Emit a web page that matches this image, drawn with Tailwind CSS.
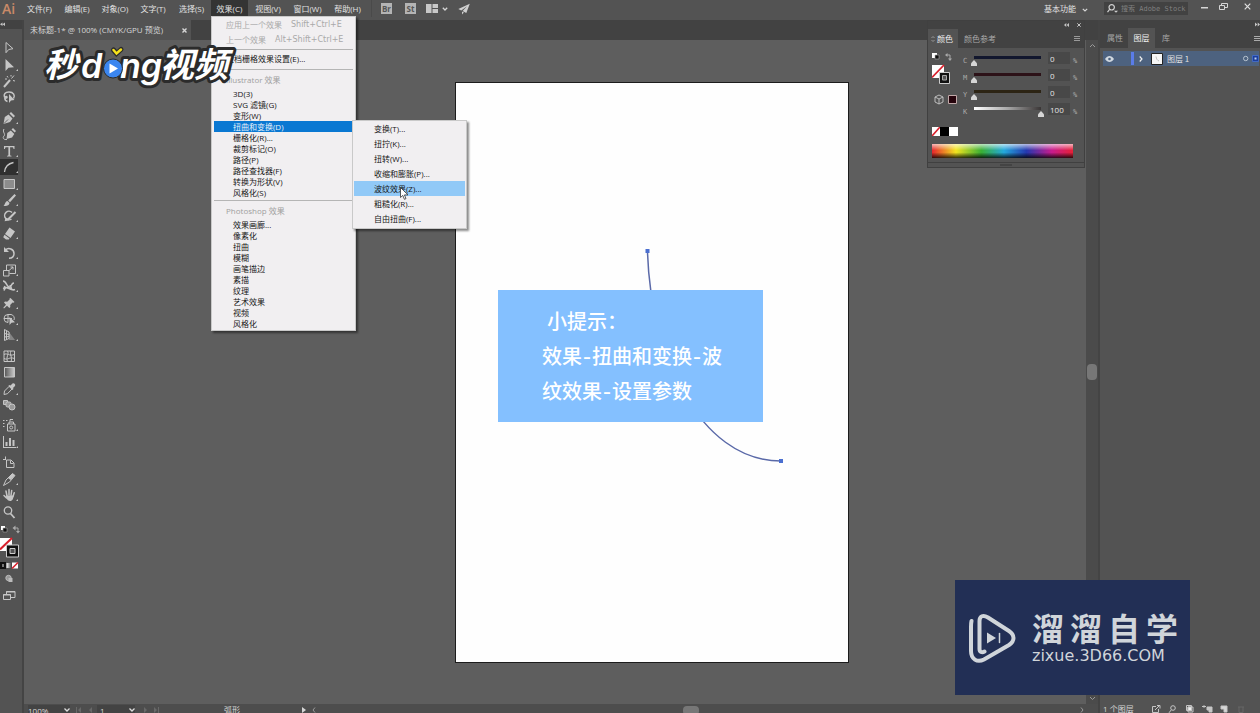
<!DOCTYPE html>
<html lang="zh-CN">
<head>
<meta charset="utf-8">
<title>未标题-1 - Illustrator</title>
<script src="https://cdn.jsdelivr.net/npm/@tailwindcss/browser@4"></script>
</head>
<body class="h-screen overflow-hidden bg-[#535353] font-['Open_Sans','Noto_Sans_CJK_SC',sans-serif] text-[8px] leading-none text-[#d6d6d6]">
<div class="relative flex h-[calc(100vh+4px)] flex-col">

  <!-- Menu bar -->
  <header class="relative z-30 flex h-5 shrink-0 items-start bg-[#535353]">
    <div class="flex h-[17px] w-[21px] items-center pl-[2px] font-['Open_Sans',sans-serif] text-[14px] font-semibold text-[#c98a68]">Ai</div>
    <nav class="flex h-[17px] text-[#e2e2e2]">
      <button class="w-[37px] whitespace-nowrap">文件(F)</button>
      <button class="w-[38px] whitespace-nowrap">编辑(E)</button>
      <button class="w-[38px] whitespace-nowrap">对象(O)</button>
      <button class="w-[38px] whitespace-nowrap">文字(T)</button>
      <button class="w-[39px] whitespace-nowrap">选择(S)</button>
      <div class="relative">
        <button class="h-[17px] w-[37px] whitespace-nowrap bg-[#343434]">效果(C)</button>
        <!-- Effect menu -->
        <div class="absolute top-4 left-0 w-[145px] border border-[#c9c9c9] bg-[#f1eff1] pb-px text-[#161616] shadow-[2px_2px_2px_rgba(0,0,0,0.45)]">
          <button class="flex h-[15px] w-full items-center gap-[9px] pl-[14px] whitespace-nowrap text-[#a9a9a9]"><span>应用上一个效果</span><span class="font-['DejaVu_Sans',sans-serif]">Shift+Ctrl+E</span></button>
          <button class="flex h-[15px] w-full items-center gap-[9px] pl-[14px] whitespace-nowrap text-[#a9a9a9]"><span>上一个效果</span><span class="font-['DejaVu_Sans',sans-serif]">Alt+Shift+Ctrl+E</span></button>
          <div class="flex h-[5px] items-center"><hr class="mx-[2px] w-full border-[#b5b5b5]"></div>
          <button class="flex h-[14px] w-full items-center pl-[14px]">文档栅格效果设置(E)...</button>
          <div class="flex h-[6px] items-center"><hr class="mx-[2px] w-full border-[#b5b5b5]"></div>
          <div class="flex h-4 items-center pl-[14px] text-[#a0a0a0]">Illustrator 效果</div>
          <button class="flex h-[11px] w-full items-center pl-[21px]">3D(3)</button>
          <button class="flex h-[11px] w-full items-center pl-[21px]">SVG 滤镜(G)</button>
          <button class="flex h-[11px] w-full items-center pl-[21px]">变形(W)</button>
          <button class="flex h-[11px] w-full items-center border-x-2 border-r-[3px] border-[#f1eff1] bg-[#0a78d2] pl-[19px] text-[#e8f2fb]">扭曲和变换(D)</button>
          <button class="flex h-[11px] w-full items-center pl-[21px]">栅格化(R)...</button>
          <button class="flex h-[11px] w-full items-center pl-[21px]">裁剪标记(O)</button>
          <button class="flex h-[11px] w-full items-center pl-[21px]">路径(P)</button>
          <button class="flex h-[11px] w-full items-center pl-[21px]">路径查找器(F)</button>
          <button class="flex h-[11px] w-full items-center pl-[21px]">转换为形状(V)</button>
          <button class="flex h-[11px] w-full items-center pl-[21px]">风格化(S)</button>
          <div class="flex h-[5px] items-center"><hr class="mx-[2px] w-full border-[#b5b5b5]"></div>
          <div class="flex h-4 items-center pl-[14px] text-[#a0a0a0]">Photoshop 效果</div>
          <button class="flex h-[11px] w-full items-center pl-[21px]">效果画廊...</button>
          <button class="flex h-[11px] w-full items-center pl-[21px]">像素化</button>
          <button class="flex h-[11px] w-full items-center pl-[21px]">扭曲</button>
          <button class="flex h-[11px] w-full items-center pl-[21px]">模糊</button>
          <button class="flex h-[11px] w-full items-center pl-[21px]">画笔描边</button>
          <button class="flex h-[11px] w-full items-center pl-[21px]">素描</button>
          <button class="flex h-[11px] w-full items-center pl-[21px]">纹理</button>
          <button class="flex h-[11px] w-full items-center pl-[21px]">艺术效果</button>
          <button class="flex h-[11px] w-full items-center pl-[21px]">视频</button>
          <button class="flex h-[11px] w-full items-center pl-[21px]">风格化</button>
          <!-- Distort & transform submenu -->
          <div class="absolute top-[103px] left-[140px] w-[115px] border border-[#c9c9c9] bg-[#f1eff1] pb-[2px] shadow-[2px_2px_2px_rgba(0,0,0,0.45)]">
            <button class="flex h-[15px] w-full items-center pl-[21px]">变换(T)...</button>
            <button class="flex h-[15px] w-full items-center pl-[21px]">扭拧(K)...</button>
            <button class="flex h-[15px] w-full items-center pl-[21px]">扭转(W)...</button>
            <button class="flex h-[15px] w-full items-center pl-[21px]">收缩和膨胀(P)...</button>
            <button class="flex h-[15px] w-full items-center border-x border-[#f1eff1] bg-[#91c9f7] pl-5">波纹效果(Z)...</button>
            <button class="flex h-[15px] w-full items-center pl-[21px]">粗糙化(R)...</button>
            <button class="flex h-[15px] w-full items-center pl-[21px]">自由扭曲(F)...</button>
            <svg class="absolute top-[66px] left-[47px] h-[13px] w-[9px]" viewBox="0 0 9 13"><path d="M.5.5v10l2.3-2.1 1.6 3.9 1.6-.7-1.6-3.7H8z" fill="#fff" stroke="#333" stroke-width=".8"/></svg>
          </div>
        </div>
      </div>
      <button class="w-[40px] whitespace-nowrap">视图(V)</button>
      <button class="w-[39px] whitespace-nowrap">窗口(W)</button>
      <button class="w-[41px] whitespace-nowrap">帮助(H)</button>
    </nav>
    <div class="ml-[3px] flex h-[17px] items-center border-l border-[#4a4a4a] pl-[9px]">
      <button class="h-[11px] w-[11px] bg-[#b4b4b4] text-[8px] leading-[11px] font-bold text-[#555]">Br</button>
      <button class="ml-[13px] h-[11px] w-[11px] bg-[#b4b4b4] text-[8px] leading-[11px] font-bold text-[#555]">St</button>
      <button class="ml-[10px] flex items-center gap-1" aria-label="排列文档">
        <svg class="h-[9px] w-3" viewBox="0 0 12 9" fill="#c8c8c8"><path d="M0 0h5.5v9H0zM6.5 0H12v4H6.5zM6.5 5H12v4H6.5z"/></svg>
        <svg class="h-2 w-[6px]" viewBox="0 0 6 8" fill="none" stroke="#d6d6d6" stroke-width="1.3"><path d="M.8 2.8L3 5l2.2-2.2"/></svg>
      </button>
      <button class="ml-[10px]" aria-label="启动"><svg class="h-3 w-3" viewBox="0 0 12 12" fill="#d0d0d0"><path d="M11.8.8L.3 6l3 1.500L9 3.200 4.600 8.100 8.300 10zM4 8.600v3l1.900-2z"/></svg></button>
    </div>
    <div class="ml-auto flex h-[17px] items-center">
      <button class="flex items-center gap-[6px] text-[#e2e2e2]">基本功能
        <svg class="h-2 w-[6px]" viewBox="0 0 6 8" fill="none" stroke="#d6d6d6" stroke-width="1.2"><path d="M.8 3.800L3 6l2.200-2.200"/></svg>
      </button>
      <label class="ml-[16px] flex h-[13px] w-[84px] items-center bg-[#424242] pl-[3px]">
        <svg class="mr-[3px] h-[9px] w-[11px] shrink-0" viewBox="0 0 11 9" fill="none" stroke="#cfcfcf" stroke-width="1.2"><circle cx="4.700" cy="3.300" r="2.700"/><path d="M2.800 5.200L.5 8.200"/><path d="M7 6.800h4L9 8.800z" fill="#cfcfcf" stroke="none"/></svg>
        <input aria-label="搜索" class="w-full min-w-0 bg-transparent font-['DejaVu_Sans_Mono','Noto_Sans_CJK_SC',monospace] text-[7px] outline-none placeholder:text-[#808080]" placeholder="搜索 Adobe Stock">
      </label>
      <button class="ml-[13px]" aria-label="最小化"><svg class="h-[9px] w-[7px]" viewBox="0 0 7 9"><path d="M0 3h7v1.500H0z" fill="#d6d6d6"/></svg></button>
      <button class="ml-[11px] pb-[5px]" aria-label="还原"><svg class="h-[7px] w-[9px]" viewBox="0 0 9 7" fill="none" stroke="#d6d6d6"><path d="M.5 2.500h5v4h-5zM2.500 2.500v-2h6v4h-3"/></svg></button>
      <button class="mr-[9px] ml-[16px] pb-[5px]" aria-label="关闭"><svg class="h-[7px] w-[7px]" viewBox="0 0 7 7" stroke="#e0e0e0" stroke-width="1.200"><path d="M.7.7l5.600 5.600M6.300.7L.7 6.300"/></svg></button>
    </div>
  </header>

  <div class="flex min-h-0 flex-1">
    <!-- Tool bar -->
    <aside class="flex w-6 shrink-0 flex-col border-r-2 border-[#444] text-[#c6c6c6]">
      <div class="h-[9px] shrink-0 bg-[#424242]"><svg class="h-[9px] w-[6px]" viewBox="0 0 6 9" fill="#c6c6c6"><path d="M2.500 2.500v3.600L0 4.300zM5 2.500v3.600L2.500 4.300z"/></svg></div>
      <div class="flex h-[491px] w-5 shrink-0 flex-col pt-[11px] [&>button]:min-h-0 [&>button]:flex-1 [&_svg]:h-4 [&_svg]:w-5">
        <button aria-label="选择"><svg viewBox="0 0 20 16" fill="none" stroke="currentColor"><path d="M6 2.500v10.200l2.700-3.200 4.300-.8z"/></svg></button>
        <button aria-label="直接选择"><svg viewBox="0 0 20 16" fill="currentColor"><path d="M5.500 2v12l3-3.200 5.500-.6zM18 12v2h-2z"/></svg></button>
        <button aria-label="魔棒"><svg viewBox="0 0 20 16" fill="none" stroke="currentColor"><path d="M4 14l6-7" stroke-width="2"/><path d="M11.500 5.500l2.500-3M7 3l1 1.500M13 7.500l2 .5M11 2v1.500M5 6h2"/></svg></button>
        <button aria-label="套索"><svg viewBox="0 0 20 16" fill="none" stroke="currentColor" stroke-width="1.500"><path d="M13.500 9.500C15.500 6.500 13.500 3 9 3 5 3 3.500 5.500 4.500 8c.5 1.200 2.500 1.500 2.500.2S5 7.300 4.800 9c0 1.500 1 3 2.700 3.500"/><path d="M9 5v9l2-2.500 3.500-.5z" fill="currentColor" stroke="none"/></svg></button>
        <span class="h-1 shrink-0"></span>
        <button aria-label="钢笔"><svg viewBox="0 0 20 16" fill="currentColor"><path d="M3.500 14l1.300-7 3.700-2.500 4 4L10 12zM9.500 3.500L11 2l4 4-1.500 1.500zM18 12v2h-2z"/><path d="M4 13.500l4-4" stroke="#535353" stroke-width=".8"/></svg></button>
        <button aria-label="曲率"><svg viewBox="0 0 20 16" fill="currentColor"><path d="M6.500 13l.8-6 3.500-2.500 3.500 3.500-2.300 3.500zM11.500 3.500L13 2l3 3-1.300 1.500z"/><path d="M4 3C2 6 6 8 4 10s0 4 3 3.500" fill="none" stroke="currentColor"/></svg></button>
        <button aria-label="文字"><svg viewBox="0 0 20 16" fill="currentColor"><path d="M4 3h10.500v3h-1c0-1.300-.5-1.700-1.700-1.700h-1.700v7.400c0 .7.400 1 1.400 1v.8H7v-.8c1 0 1.400-.3 1.400-1V4.300H6.700C5.500 4.300 5 4.700 5 6H4zM18 12v2h-2z"/></svg></button>
        <button aria-label="弧形" class="w-[18px] bg-[#303030]"><svg viewBox="0 0 20 16" fill="none" stroke="currentColor"><path d="M4.500 13C5 8 8.500 4.500 13.500 3.500" stroke-width="1.300"/><path d="M18 12v2h-2z" fill="currentColor" stroke="none"/></svg></button>
        <button aria-label="矩形"><svg viewBox="0 0 20 16"><path d="M4 3.500h10.500v9H4z" fill="#8c8c8c" stroke="currentColor"/><path d="M18 12v2h-2z" fill="currentColor"/></svg></button>
        <button aria-label="画笔"><svg viewBox="0 0 20 16" fill="currentColor"><path d="M14.500 2L16 3.500l-6 6.700L8.200 8.500zM7.500 9l2 2c-.5 3-3.500 3.200-6 2.700C5.500 12.500 4.800 9.500 7.500 9zM18 12v2h-2z"/></svg></button>
        <button aria-label="Shaper"><svg viewBox="0 0 20 16" fill="none" stroke="currentColor" stroke-width="1.500"><path d="M12 4.500A4.300 4.300 0 1 0 11.500 11"/><path d="M15.500 4L8 11.500l-2 .5.500-2" stroke-width="2"/><path d="M18 12v2h-2z" fill="currentColor" stroke="none"/></svg></button>
        <button aria-label="橡皮擦"><svg viewBox="0 0 20 16" fill="currentColor"><path d="M9.500 2.500l5.500 4-4.500 6.500-5.500-4zM4.500 9.800l5 3.700-.7 1H6l-2.800-2.200zM18 12v2h-2z"/></svg></button>
        <span class="h-1 shrink-0"></span>
        <button aria-label="旋转"><svg viewBox="0 0 20 16" fill="none" stroke="currentColor" stroke-width="1.500"><path d="M5.500 5c3-3 8.500-1 8.500 3.500 0 3-2 4.700-5 4.700"/><path d="M4 2v5h5z" fill="currentColor" stroke="none"/><path d="M18 12v2h-2z" fill="currentColor" stroke="none"/></svg></button>
        <button aria-label="比例缩放"><svg viewBox="0 0 20 16" fill="none" stroke="currentColor"><path d="M3.500 8.500h5.500V14H3.500zM6.500 8V3h9v8.500H9.500M9 8.500l4-3.500M10.500 5H13v2.500"/><path d="M18 12v2h-2z" fill="currentColor" stroke="none"/></svg></button>
        <button aria-label="宽度"><svg viewBox="0 0 20 16" fill="none" stroke="currentColor" stroke-width="1.600"><path d="M3 3c2 0 3 2 4 4s3 3 4 1 1-3 3-3M4 12.500c1-4 3-3 5-2s4 2 6 1M5 8l-1.500 3M10 7l2 5"/><path d="M18 12v2h-2z" fill="currentColor" stroke="none"/></svg></button>
        <button aria-label="操控变形"><svg viewBox="0 0 20 16" fill="currentColor"><path d="M10.500 3l4 4-1 .8-1-.3-2.300 2.400.1 2.200-1 .9L7 10.700 4 13.500l-.7-.7L6 9.700 4 7.500l1-.9 2.200.1L9.600 4.500 9.500 3.600zM18 12v2h-2z"/></svg></button>
        <button aria-label="形状生成器"><svg viewBox="0 0 20 16" fill="none" stroke="currentColor"><path d="M8 11.500a4 4 0 1 1 0-8h3a4 4 0 0 1 3 5.500M8 3.500v8M4 7.500h8"/><path d="M9.500 6v8l2-2.300 3.500-.5zM18 12v2h-2z" fill="currentColor" stroke="none"/></svg></button>
        <button aria-label="透视网格"><svg viewBox="0 0 20 16" fill="none" stroke="currentColor"><path d="M9 5l6 8H9z" fill="#858585" stroke="none"/><path d="M4.500 2.500v11M4.500 2.500l4.500 2.500v6.500l-4.500 2M6.500 4v8.500M4.500 6.500L9 7.500M4.500 10L9 9.500"/><path d="M18 12v2h-2z" fill="currentColor" stroke="none"/></svg></button>
        <span class="h-1 shrink-0"></span>
        <button aria-label="网格"><svg viewBox="0 0 20 16" fill="none" stroke="currentColor"><path d="M4 3h10.500v10.500H4zM4 6.500c3-2 5 2 10.500 0M4 10.500c4 2 5-2 10.500 0M7.500 3c2 3-2 6 0 10.500M11 3c-2 4 2 6 0 10.500"/></svg></button>
        <button aria-label="渐变"><svg viewBox="0 0 20 16"><defs><linearGradient id="tool-gradient"><stop stop-color="#555"/><stop offset="1" stop-color="#ccc"/></linearGradient></defs><path d="M4.500 3.500h10v9.500h-10z" fill="url(#tool-gradient)" stroke="currentColor"/></svg></button>
        <button aria-label="吸管"><svg viewBox="0 0 20 16" fill="none" stroke="currentColor"><path d="M9 5.500L4.500 10 4 13.500l3.500-.8L12 8"/><path d="M9.500 4l1 .5 2-2c1.500-1 3.500 1 2.500 2.500l-2 2 .5 1-1.200 1L8.200 5zM18 12v2h-2z" fill="currentColor" stroke="none"/></svg></button>
        <button aria-label="混合"><svg viewBox="0 0 20 16" fill="#999" stroke="currentColor"><path d="M3.500 3.500h4v4h-4z"/><rect x="6" y="5" width="5" height="5" rx="1.500"/><circle cx="12" cy="10" r="3"/></svg></button>
        <span class="h-1 shrink-0"></span>
        <button aria-label="符号喷枪"><svg viewBox="0 0 20 16" fill="none" stroke="currentColor"><path d="M7.500 7h7.500v7H7.500zM9 7V5h4.500v2M10 4.500v-2h3"/><circle cx="11.200" cy="10.500" r="1.500"/><path d="M3 3.500h1.500M6 3.500h1.500M3 6.500h1.500M3 9.500h1.500"/><path d="M18 12v2h-2z" fill="currentColor" stroke="none"/></svg></button>
        <button aria-label="柱形图"><svg viewBox="0 0 20 16" fill="currentColor"><path d="M3 2h1v11h12v1H3zM5.500 8h2v4h-2zM9 4h2v8H9zM12.500 6h2v6h-2zM18 12v2h-2z"/></svg></button>
        <span class="h-1 shrink-0"></span>
        <button aria-label="画板"><svg viewBox="0 0 20 16" fill="none" stroke="currentColor"><path d="M3 5.500h3M5.500 2.500v3M6.500 6h4.500l3 3v4.500H6.500zM10.500 6.500V9.500h3"/></svg></button>
        <button aria-label="切片"><svg viewBox="0 0 20 16" fill="none" stroke="currentColor"><path d="M3.500 14.500L6 9l6.500-6.500 2.500 2L9.500 11z"/><path d="M8 7l2.500 2 4.500-4.500-2.500-2zM18 12v2h-2z" fill="currentColor" stroke="none"/></svg></button>
        <button aria-label="抓手"><svg viewBox="0 0 20 16" fill="none" stroke="currentColor" stroke-width="1.500" stroke-linecap="round"><path d="M7 9L6 4M9 8V2.500M11 8.500l.7-5M13 9.500l1.200-3.700M6.500 11L4 8.500"/><path d="M6 8.500h7.500c0 3-1 5.500-3.500 5.500s-4-3-4-5.500z" fill="currentColor" stroke="none"/><path d="M18 12v2h-2z" fill="currentColor" stroke="none"/></svg></button>
        <button aria-label="缩放"><svg viewBox="0 0 20 16" fill="none" stroke="currentColor" stroke-width="1.300"><circle cx="8" cy="6.500" r="3.700"/><path d="M10.500 9.500l4 4.500" stroke-width="1.800"/></svg></button>
      </div>
      <!-- Fill, stroke and screen modes -->
      <svg class="mt-[4px] h-[78px] w-[22px] shrink-0" viewBox="0 0 22 78" role="img" aria-label="填色和描边">
        <path d="M1 2h4v4H1z" fill="#fff"/><path d="M3 4h4v4H3z" fill="#111" stroke="#aaa" stroke-width=".6"/>
        <path d="M14 4h4v4" fill="none" stroke="#aaa"/><path d="M12.500 4l3-2.500v5zM18 9.500l-2-2.500h4z" fill="#aaa"/>
        <path d="M0 14h12v13H0z" fill="#fff"/><path d="M0 25.500L12 14" stroke="#d8202c" stroke-width="2"/>
        <path d="M6.500 21h12v12h-12z" fill="#111" stroke="#ccc"/><path d="M10 24.500h5v5h-5z" fill="#535353" stroke="#ccc"/>
        <path d="M0 38h6v7H0z" fill="#111"/><path d="M2 40h2v3H2z" fill="#777"/>
        <defs><linearGradient id="mode-gradient"><stop stop-color="#fff"/><stop offset="1" stop-color="#444"/></linearGradient></defs>
        <path d="M6.500 39h5v5h-5z" fill="url(#mode-gradient)"/>
        <path d="M12 38.500h6v6h-6z" fill="#fff"/><path d="M12 44.500l6-6" stroke="#d8202c" stroke-width="1.600"/>
        <circle cx="8.500" cy="54" r="2.700" fill="#999" stroke="#bbb"/><path d="M8.500 54h4v4h-4z" fill="#bbb"/>
        <path d="M3.500 70.500h7v5h-7zM6.500 70v-2.500H15v6h-4" fill="none" stroke="#c6c6c6"/><path d="M3.500 70h7v1.500h-7zM6.500 67H15v1.500H6.500z" fill="#c6c6c6"/>
      </svg>
    </aside>

    <!-- Document window -->
    <main class="relative flex min-w-0 flex-1 flex-col">
      <div class="flex h-5 shrink-0 bg-[#424242]">
        <div class="flex w-[167px] items-center justify-between bg-[#535353] pr-[4px] pl-[6px] whitespace-nowrap">
          <span>未标题-1* @ 100% (CMYK/GPU 预览)</span>
          <button aria-label="关闭文档"><svg class="h-[5px] w-[5px]" viewBox="0 0 5 5" stroke="#d6d6d6" stroke-width="1.400"><path d="M.5.500l4 4M4.500.500l-4 4"/></svg></button>
        </div>
      </div>
      <div class="flex min-h-0 flex-1">
        <div class="relative min-w-0 flex-1 overflow-hidden bg-[#5e5e5e]">
          <div class="absolute top-[42px] left-[431px] h-[581px] w-[394px] border border-[#1c1c1c] bg-[#fefefe]">
            <svg class="absolute top-[160px] left-[180px] h-[226px] w-[150px]" viewBox="0 0 150 226" fill="none" stroke="#5a69a8" stroke-width="1.500"><path d="M11.500 8C14 108 62 218 145 218"/><path d="M9.500 6h4v4h-4zM143 216h4v4h-4z" fill="#4b6fd0" stroke="none"/></svg>
            <div class="absolute top-[207px] left-[42px] h-[132px] w-[265px] bg-[#84c0ff] pt-[13px] pl-[44px] font-['Noto_Sans_CJK_SC',sans-serif] text-[20px] leading-[35px] font-medium whitespace-nowrap text-white [font-feature-settings:'hwid']">
              <p class="pl-[5px]">小提示：</p>
              <p>效果-扭曲和变换-波</p>
              <p>纹效果-设置参数</p>
            </div>
          </div>
        </div>
        <div class="relative flex w-3 shrink-0 flex-col items-center justify-between bg-[#4b4b4b] pt-[3px] pb-[3px]">
          <svg class="h-[5px] w-[7px]" viewBox="0 0 7 5" fill="none" stroke="#9a9a9a"><path d="M1 4l2.500-2.500L6 4"/></svg>
          <span class="h-4 w-[10px] rounded-sm bg-[#777]"></span>
          <svg class="h-[5px] w-[7px]" viewBox="0 0 7 5" fill="none" stroke="#9a9a9a"><path d="M1 1l2.500 2.500L6 1"/></svg>
        </div>
      </div>
      <!-- Status bar -->
      <footer class="flex h-[13px] shrink-0 items-center bg-[#4d4d4d] pb-px pl-[4px]">
        <label class="flex w-[42px] items-center justify-between bg-[#434343]"><input aria-label="缩放比例" value="100%" class="w-6 bg-transparent outline-none"><svg class="h-1 w-[6px]" viewBox="0 0 6 4" fill="none" stroke="#ddd" stroke-width="1.300"><path d="M.5.500L3 3 5.500.500"/></svg></label>
        <svg class="ml-[6px] h-[6px] w-4" viewBox="0 0 16 6" fill="#686868"><path d="M0 0h1v6H0zM5 0v6L2 3zM16 0v6l-3-3z"/></svg>
        <label class="ml-[5px] flex w-[38px] items-center justify-between bg-[#434343] pl-[3px]"><input aria-label="画板编号" value="1" class="w-4 bg-transparent outline-none"><svg class="h-1 w-[6px]" viewBox="0 0 6 4" fill="none" stroke="#ddd" stroke-width="1.300"><path d="M.5.500L3 3 5.500.500"/></svg></label>
        <svg class="ml-[9px] h-[6px] w-4" viewBox="0 0 16 6" fill="#686868"><path d="M0 0v6l3-3zM10 0v6l3-3zM14 0h1v6h-1z"/></svg>
        <span class="ml-[64px]">弧形</span>
        <svg class="ml-[62px] h-[6px] w-[14px]" viewBox="0 0 14 6"><path d="M0 0v6l4-3z" fill="#d6d6d6"/><path d="M13 .5L11 3l2 2.500" fill="none" stroke="#999"/></svg>
        <span class="flex flex-1 justify-center pr-[14px]"><span class="h-[9px] w-4 rounded-sm bg-[#777]"></span></span>
        <svg class="mr-[14px] h-[6px] w-1" viewBox="0 0 4 6" fill="none" stroke="#999"><path d="M1 .5L3 3 1 5.500"/></svg>
      </footer>

      <!-- Colour panel -->
      <section class="absolute top-0 right-[13px] w-[158px] border border-[#404040] bg-[#535353]">
        <div class="flex h-2 items-center justify-end gap-2 bg-[#424242] pr-[3px]">
          <svg class="h-[4px] w-[5px]" viewBox="0 0 5 4" fill="#c6c6c6"><path d="M2.300 0v4L0 2zM5 0v4L2.700 2z"/></svg>
          <svg class="h-[4px] w-[4px]" viewBox="0 0 4 4" stroke="#c6c6c6"><path d="M.3.300l3.400 3.400M3.700.300L.3 3.700"/></svg>
        </div>
        <div class="flex h-[19px] bg-[#424242]">
          <button class="flex w-[30px] items-center gap-[2px] bg-[#535353] pl-[3px] text-[#f0f0f0]"><svg class="h-[6px] w-[4px]" viewBox="0 0 4 6" fill="none" stroke="#aaa" stroke-width=".8"><path d="M.5 2L2 .5 3.500 2M.5 4L2 5.500 3.500 4"/></svg>颜色</button>
          <button class="pl-[6px] text-[#a8a8a8]">颜色参考</button>
          <button class="mr-[4px] ml-auto" aria-label="面板菜单"><svg class="h-[5px] w-[6px]" viewBox="0 0 6 5" fill="#999"><path d="M0 0h6v1H0zM0 2h6v1H0zM0 4h6v1H0z"/></svg></button>
        </div>
        <div class="flex pt-[4px] pl-[4px]">
          <svg class="mr-[4px] h-[54px] w-[27px] shrink-0" viewBox="0 0 27 54" role="img" aria-label="填色和描边">
            <path d="M0 1h5v5H0z" fill="#fff"/><path d="M3 3h4v4H3z" fill="#111" stroke="#aaa" stroke-width=".6"/>
            <path d="M15 3h3v4" fill="none" stroke="#aaa"/><path d="M13 3l2.500-2v4zM18 9l-2-2.500h4z" fill="#aaa"/>
            <path d="M0 13h12v13H0z" fill="#fff"/><path d="M0 25.500L12 13" stroke="#d8202c" stroke-width="1.800"/>
            <path d="M7.500 20.500h10v11h-10z" fill="#111" stroke="#ccc"/><path d="M10.500 23.500h4v4.500h-4z" fill="#535353" stroke="#aaa"/>
            <path d="M3 45l4-2 4 2v5l-4 2-4-2zM3 45l4 2 4-2M7 47v5" fill="none" stroke="#c6c6c6" stroke-width=".9"/>
            <path d="M16.500 43.500h8v8h-8z" fill="#26040c" stroke="#c0a8a8"/>
          </svg>
          <div class="flex flex-col font-['DejaVu_Sans_Mono',monospace] text-[7px] text-[#aaa] [&_input[type=range]]:h-[14px] [&_input[type=range]]:w-[73px] [&_input[type=range]]:appearance-none [&_input[type=range]]:bg-[length:67px_3px] [&_input[type=range]]:bg-[position:center_top_4px] [&_input[type=range]]:bg-no-repeat [&_input[type=range]::-webkit-slider-thumb]:mt-[8px] [&_input[type=range]::-webkit-slider-thumb]:h-[6px] [&_input[type=range]::-webkit-slider-thumb]:w-[6px] [&_input[type=range]::-webkit-slider-thumb]:appearance-none [&_input[type=range]::-webkit-slider-thumb]:bg-[#d6d6d6] [&_input[type=range]::-webkit-slider-thumb]:[clip-path:polygon(50%_0,100%_55%,100%_100%,0_100%,0_55%)] [&_input[type=text]]:h-[12px] [&_input[type=text]]:w-[22px] [&_input[type=text]]:bg-[#484848] [&_input[type=text]]:pl-[2px] [&_input[type=text]]:font-['Open_Sans',sans-serif] [&_input[type=text]]:text-[8px] [&_input[type=text]]:text-[#e6e6e6]">
            <div class="flex h-[17px] items-start"><label for="c" class="w-2 pt-[6px]">C</label><input type="range" aria-label="C" value="0" class="bg-[linear-gradient(#12172e,#12172e)]"><input type="text" id="c" value="0" class="ml-[4px]"><span class="pt-[6px] pl-[3px]">%</span></div>
            <div class="flex h-[17px] items-start"><label for="m" class="w-2 pt-[6px]">M</label><input type="range" aria-label="M" value="0" class="bg-[linear-gradient(#2c1218,#2c1218)]"><input type="text" id="m" value="0" class="ml-[4px]"><span class="pt-[6px] pl-[3px]">%</span></div>
            <div class="flex h-[17px] items-start"><label for="y" class="w-2 pt-[6px]">Y</label><input type="range" aria-label="Y" value="0" class="bg-[linear-gradient(#2c2414,#2c2414)]"><input type="text" id="y" value="0" class="ml-[4px]"><span class="pt-[6px] pl-[3px]">%</span></div>
            <div class="flex h-[17px] items-start"><label for="k" class="w-2 pt-[6px]">K</label><input type="range" aria-label="K" value="100" class="bg-[linear-gradient(90deg,#fff,#a8a8a8_50%,#3a3636)]"><input type="text" id="k" value="100" class="ml-[4px]"><span class="pt-[6px] pl-[3px]">%</span></div>
          </div>
        </div>
        <div class="px-[4px]">
          <svg class="mt-[7px] h-[9px] w-[26px]" viewBox="0 0 26 9" role="img" aria-label="无、黑色、白色"><path d="M0 0h8v9H0z" fill="#fff"/><path d="M0 9l8-9" stroke="#d8202c" stroke-width="1.600"/><path d="M8 0h9v9H8z" fill="#000"/><path d="M17 0h9v9h-9z" fill="#fff"/></svg>
          <div class="mt-[8px] mr-[7px] h-[14px] bg-[linear-gradient(180deg,#ffffffaa,#ffffff00_45%,#00000000_60%,#000000cc),linear-gradient(90deg,#e8252d,#f2e51f_17%,#39b034_35%,#23a9dd_51%,#2438b0_67%,#c91b8d_85%,#e62036)]"></div>
        </div>
        <div class="mt-[4px] flex h-[5px] items-center justify-center border-t border-[#404040]"><span class="h-[2px] w-3 bg-[#444]"></span></div>
      </section>
    </main>

    <!-- Layers panel -->
    <aside class="flex w-[162px] shrink-0 flex-col border-l-2 border-[#444]">
      <div class="flex h-2 shrink-0 items-center justify-end bg-[#424242]"><svg class="h-[5px] w-[5px]" viewBox="0 0 5 5" fill="#c6c6c6"><path d="M0 .5v4l2.300-2zM2.700.500v4L5 2.500z"/></svg></div>
      <div class="flex h-5 shrink-0 bg-[#424242] pl-[2px] text-[#a8a8a8]">
        <button class="w-[26px]">属性</button>
        <button class="w-[27px] bg-[#535353] text-[#f0f0f0]">图层</button>
        <button class="w-[22px]">库</button>
        <button class="ml-auto" aria-label="面板菜单"><svg class="h-[5px] w-[6px]" viewBox="0 0 6 5" fill="#aaa"><path d="M0 0h6v1H0zM0 2h6v1H0zM0 4h6v1H0z"/></svg></button>
      </div>
      <div class="mr-px ml-[3px] mt-[3px] flex h-[15px] shrink-0 items-center bg-[#4d627f] pl-[2px] text-[#e0e0e0]">
        <svg class="h-[6px] w-[9px]" viewBox="0 0 9 6"><path d="M0 3c2.500-4 6.500-4 9 0-2.500 4-6.500 4-9 0z" fill="#d0d8e0"/><circle cx="4.500" cy="3" r="1.300" fill="#4d627f"/></svg>
        <span class="ml-[17px] h-[13px] w-[3px] bg-[#5a7ce8]"></span>
        <svg class="ml-[5px] h-[6px] w-1" viewBox="0 0 4 6" fill="none" stroke="#f0f0f0" stroke-width="1.200"><path d="M.7.500L3 3 .7 5.500"/></svg>
        <svg class="mr-[4px] ml-[8px] h-3 w-3" viewBox="0 0 12 12"><path d="M.5.500h11v11H.5z" fill="#f6f6f6" stroke="#222"/><path d="M5 3.500c.3 2.500 1.500 4 3 4.500" fill="none" stroke="#999" stroke-width=".6"/></svg>
        <span class="font-['Noto_Sans_CJK_SC',sans-serif]">图层 1</span>
        <svg class="ml-auto h-[7px] w-4" viewBox="0 0 16 7"><circle cx="2.700" cy="3.500" r="2.200" fill="none" stroke="#b8c4d0"/><path d="M9.500.500h6v6h-6z" fill="#1c3e9c" stroke="#4570d0" stroke-width=".8"/><path d="M11.500 2.500h2v2h-2z" fill="#b8ccf0"/></svg>
      </div>
      <footer class="mt-auto flex h-[15px] shrink-0 items-center pb-px pl-[3px]">
        <span>1 个图层</span>
        <svg class="ml-[18px] h-2 w-[94px]" viewBox="0 0 94 8" fill="none" stroke="#c6c6c6"><path d="M4 1.500H.5v6h6V4M3 5l4-4M5 .5h3v3"/><circle cx="21" cy="3" r="2.300"/><path d="M19.300 4.800L17 7.800"/><path d="M34.500.500h5v5h-5zM36 2h5v5h-5z"/><path d="M36 2h3.500v3.500H36z" fill="#eee"/><path d="M50 1.500h4M55 2h5v5h-3V5h-2z" fill="#c6c6c6"/><path d="M50 1.500l2.500-1.500v3z" fill="#c6c6c6" stroke="none"/><path d="M69 1h6v6h-3V4h-3z" fill="#d6d6d6"/><path d="M86 2h6M87 2v5.500h4V2" stroke="#666"/></svg>
      </footer>
    </aside>
  </div>

  <!-- Video logo overlay -->
  <svg class="absolute top-8 left-10 z-40 h-[64px] w-[204px] overflow-visible" viewBox="40 32 204 64" role="img" aria-label="秒dong视频">
    <g fill="#fff" stroke="#2b2b2b" stroke-width="6" stroke-linejoin="round" paint-order="stroke" font-style="italic">
      <g font-family="Noto Sans CJK SC, sans-serif" font-size="34" font-weight="700"><text x="44" y="77">秒</text><text x="160" y="77">视频</text></g>
      <g font-family="Inter, sans-serif" font-size="34" font-weight="600"><text x="81" y="78">d</text><text x="120" y="78">ng</text></g>
    </g>
    <circle cx="113" cy="68.500" r="9.500" fill="#3b86f0" stroke="#2b2b2b" stroke-width="1"/>
    <path d="M109.500 63.500v10l8.500-5z" fill="#fff"/>
    <path d="M113.500 50l3 3.500 4.500-4" fill="none" stroke="#2b2b2b" stroke-width="5" stroke-linecap="round"/>
    <path d="M113.500 50l3 3.500 4.500-4" fill="none" stroke="#f6e21c" stroke-width="2.500" stroke-linecap="round"/>
  </svg>

  <!-- Site watermark -->
  <div class="absolute right-[70px] bottom-[22px] z-40 flex h-[115px] w-[235px] items-center bg-[#222f55] pl-[14px] text-[#d0d5da]">
    <svg class="h-[50px] w-[47px] shrink-0" viewBox="0 0 47 50" fill="none" stroke="currentColor" stroke-linecap="round"><path d="M2.500 8C2 10 2 12 2 14v24C2 46 8 50 15 46.500L40 32c6-4 6-10 0-14L19 4.500C14 1.500 10.500 3 10.500 8v28c0 3 2.500 4 5 2.500" stroke-width="4"/><path d="M18 19.500v11l9-5.500z" fill="currentColor" stroke="none"/><path d="M30.500 20.500v9" stroke-width="1.500"/></svg>
    <div class="ml-[16px] w-[146px] pt-px">
      <div class="flex justify-between font-['Noto_Sans_CJK_SC',sans-serif] text-[32px] leading-[32px] font-bold"><span>溜</span><span>溜</span><span>自</span><span>学</span></div>
      <div class="mt-[4px] font-['DejaVu_Sans',sans-serif] text-[16px] leading-[18px]">zixue.3D66.COM</div>
    </div>
  </div>
</div>
</body>
</html>
